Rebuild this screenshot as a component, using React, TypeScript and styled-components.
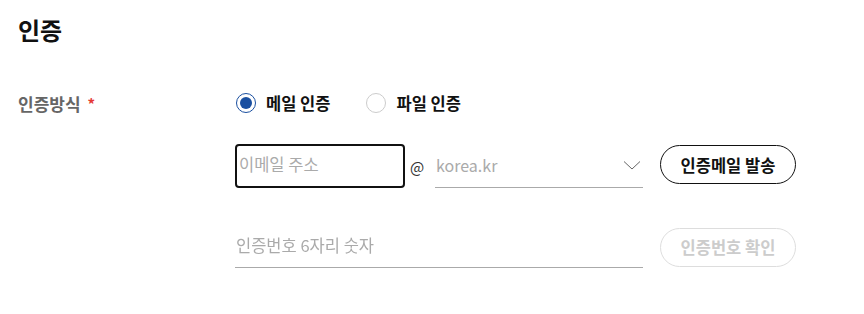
import styled, { createGlobalStyle } from 'styled-components';

const GlobalStyle = createGlobalStyle`
  html, body {
    margin: 0;
    padding: 0;
    background: #fff;
  }
  body {
    font-family: "Noto Sans CJK KR", "Noto Sans", sans-serif;
    color: #111;
  }
`;

const Page = styled.div`
  padding: 14px 18px;
`;

const Title = styled.h2`
  margin: 0;
  font-size: 24px;
  line-height: 32px;
  font-weight: 700;
  color: #111;
`;

const Form = styled.div`
  display: grid;
  grid-template-columns: 217px 1fr;
  margin-top: 37px;
`;

const Label = styled.div`
  height: 40px;
  display: flex;
  align-items: center;
  gap: 7px;
  font-size: 17px;
  font-weight: 700;
  color: #666;
`;

const Required = styled.span`
  color: #e53935;
  font-size: 15px;
`;

const Fields = styled.div`
  display: flex;
  flex-direction: column;
`;

const RadioGroup = styled.div`
  height: 40px;
  display: flex;
  align-items: center;
  gap: 36px;
  padding-left: 1px;
`;

const RadioLabel = styled.label`
  display: flex;
  align-items: center;
  gap: 10px;
  font-size: 16.5px;
  font-weight: 700;
  color: #111;
  cursor: pointer;
`;

const RadioCircle = styled.span<{ $checked?: boolean }>`
  box-sizing: border-box;
  width: 20px;
  height: 20px;
  border-radius: 50%;
  border: 1px solid ${(p) => (p.$checked ? '#1a4fa0' : '#ccc')};
  display: flex;
  align-items: center;
  justify-content: center;

  &::after {
    content: '';
    width: 12px;
    height: 12px;
    border-radius: 50%;
    background: ${(p) => (p.$checked ? '#1a4fa0' : 'transparent')};
  }
`;

const Row = styled.div<{ $top: number }>`
  display: flex;
  align-items: center;
  margin-top: ${(p) => p.$top}px;
`;

const BoxInput = styled.input`
  box-sizing: border-box;
  width: 170px;
  height: 44px;
  border: 2px solid #111;
  border-radius: 4px;
  padding: 0 2px 4px;
  font-family: inherit;
  font-size: 16.5px;
  color: #111;
  outline: none;

  &::placeholder {
    color: #aaa;
  }
`;

const At = styled.span`
  width: 30px;
  padding-left: 5px;
  box-sizing: border-box;
  font-size: 15px;
  color: #333;
`;

const Select = styled.div`
  box-sizing: border-box;
  width: 208px;
  height: 44px;
  border-bottom: 1px solid #aaa;
  display: flex;
  align-items: center;
  justify-content: space-between;
  padding: 0 2px 2px 1px;
  font-size: 16px;
  color: #aaa;
`;

const LineInput = styled.input`
  box-sizing: border-box;
  width: 408px;
  height: 42px;
  border: none;
  border-bottom: 1px solid #aaa;
  padding: 0 1px 4px;
  font-family: inherit;
  font-size: 16.5px;
  outline: none;
  background: transparent;

  &::placeholder {
    color: #aaa;
  }
`;

const Button = styled.button<{ $disabled?: boolean }>`
  box-sizing: border-box;
  width: 136px;
  height: 39px;
  margin-left: 17px;
  border-radius: 20px;
  border: 1px solid ${(p) => (p.$disabled ? '#ddd' : '#111')};
  background: #fff;
  color: ${(p) => (p.$disabled ? '#ccc' : '#111')};
  font-family: inherit;
  font-size: 16.5px;
  font-weight: 700;
  padding: 0;
  cursor: ${(p) => (p.$disabled ? 'default' : 'pointer')};
`;

const Chevron = () => (
  <svg width="18" height="10" viewBox="0 0 18 10" fill="none">
    <path d="M1 1.5l8 7.5 8-7.5" stroke="#666" strokeWidth="1" />
  </svg>
);

export default function App() {
  return (
    <Page>
      <GlobalStyle />
      <Title>인증</Title>
      <Form>
        <Label>
          인증방식 <Required>*</Required>
        </Label>
        <Fields>
          <RadioGroup>
            <RadioLabel>
              <RadioCircle $checked />
              메일 인증
            </RadioLabel>
            <RadioLabel>
              <RadioCircle />
              파일 인증
            </RadioLabel>
          </RadioGroup>
          <Row $top={21}>
            <BoxInput placeholder="이메일 주소" autoFocus />
            <At>@</At>
            <Select>
              <span>korea.kr</span>
              <Chevron />
            </Select>
            <Button style={{ marginTop: -3 }}>인증메일 발송</Button>
          </Row>
          <Row $top={38}>
            <LineInput placeholder="인증번호 6자리 숫자" />
            <Button $disabled>인증번호 확인</Button>
          </Row>
        </Fields>
      </Form>
    </Page>
  );
}
